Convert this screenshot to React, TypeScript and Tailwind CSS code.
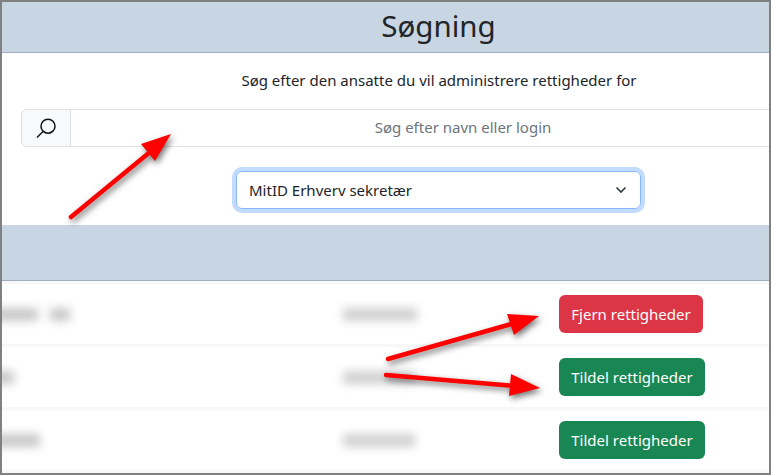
import React from "react";

function Arrow({ d, head }: { d: string; head: string }) {
  return (
    <g>
      <path d={d} stroke="#ff0000" strokeWidth={4.5} strokeLinecap="round" fill="none" />
      <polygon points={head} fill="#ff0000" />
    </g>
  );
}

function Row({ btn, color, w1, w2, w3, extra }: { btn: string; color: string; w1: number; w2: number; w3: string; extra?: boolean }) {
  return (
    <div className="h-[63px] border-b-[3px] border-[#f8f8f8] flex items-center relative overflow-hidden bg-white">
      <div className="w-[335px] flex items-center gap-[12px]">
        <div className="h-[13px] bg-[#c8c8c8] blur-[5px] -ml-2" style={{ width: w1 }} />
        {extra && <div className="h-[13px] w-[20px] bg-[#c8c8c8] blur-[5px]" />}
      </div>
      <div className="w-[222px] flex items-center">
        <div className="h-[13px] bg-[#d0d0d0] blur-[5px] ml-[6px]" style={{ width: w2 }} />
      </div>
      <button className={`h-[38px] px-3 rounded-[6px] text-white text-[15px] ${color} ${w3}`}>{btn}</button>
    </div>
  );
}

export default function App() {
  return (
    <div
      className="w-[771px] h-[475px] border-2 border-[#808080] bg-white overflow-hidden relative text-[#212529]"
      style={{ fontFamily: '"Noto Sans", "Open Sans", sans-serif' }}
    >
      <div className="h-[51px] bg-[#c8d5e3] border-b border-[#a0aec0] flex items-center justify-center">
        <h1 className="text-[29.5px] leading-none ml-[106px] pb-[3px]">Søgning</h1>
      </div>
      <p className="text-[15px] text-center mt-[17px] h-[20px] leading-[20px] ml-[107px]">
        Søg efter den ansatte du vil administrere rettigheder for
      </p>
      <div className="flex mt-[19px] pl-[19px]">
        <div className="w-[50px] h-[38px] flex items-center justify-center bg-[#f8f9fa] border border-[#dee2e6] rounded-l-[6px] shrink-0">
          <svg width="22" height="22" viewBox="0 0 22 22" fill="none" stroke="#111" strokeWidth="1.5">
            <circle cx="13" cy="9.2" r="7" />
            <path d="M8 14.5 L2 20.5" />
          </svg>
        </div>
        <div className="h-[38px] w-[760px] -ml-px border-y border-l border-[#dee2e6] flex items-center justify-center text-[#6c757d] text-[15px] pl-[25px] pb-[2px] shrink-0">
          Søg efter navn eller login
        </div>
      </div>
      <div className="flex mt-[24px] pl-[234px]">
        <div className="w-[405px] h-[38px] rounded-[6px] border border-[#86b7fe] shadow-[0_0_0_4px_#c2dbfe] flex items-center justify-between pl-[12px] pr-[13px] text-[15px]">
          <span>MitID Erhverv sekretær</span>
          <svg width="12" height="8" viewBox="0 0 12 8" fill="none" stroke="#343a40" strokeWidth="1.6">
            <path d="M1.5 1.5 L6 6 L10.5 1.5" />
          </svg>
        </div>
      </div>
      <div className="h-[56px] mt-[16px] bg-[#c8d5e3] border-b border-[#a0aec0]" />
      <div className="border-t-[3px] border-[#f8f8f8]">
        <Row btn="Fjern rettigheder" color="bg-[#dc3545]" w1={44} w2={74} w3="w-[144px]" extra />
        <Row btn="Tildel rettigheder" color="bg-[#198754]" w1={20} w2={72} w3="w-[146px]" />
        <Row btn="Tildel rettigheder" color="bg-[#198754]" w1={46} w2={72} w3="w-[146px]" />
      </div>
      <svg
        className="absolute left-[-2px] top-[-2px] pointer-events-none"
        width="771"
        height="475"
        style={{ filter: "drop-shadow(2px 3px 3px rgba(0,0,0,0.55))" }}
      >
        <Arrow d="M71 217 L150 152" head="171,134 141,144 155,161" />
        <Arrow d="M388 359 L515 323" head="539,316 507,314 514,335" />
        <Arrow d="M386 375 L515 386" head="540,388 511,374 509,396" />
      </svg>
    </div>
  );
}
